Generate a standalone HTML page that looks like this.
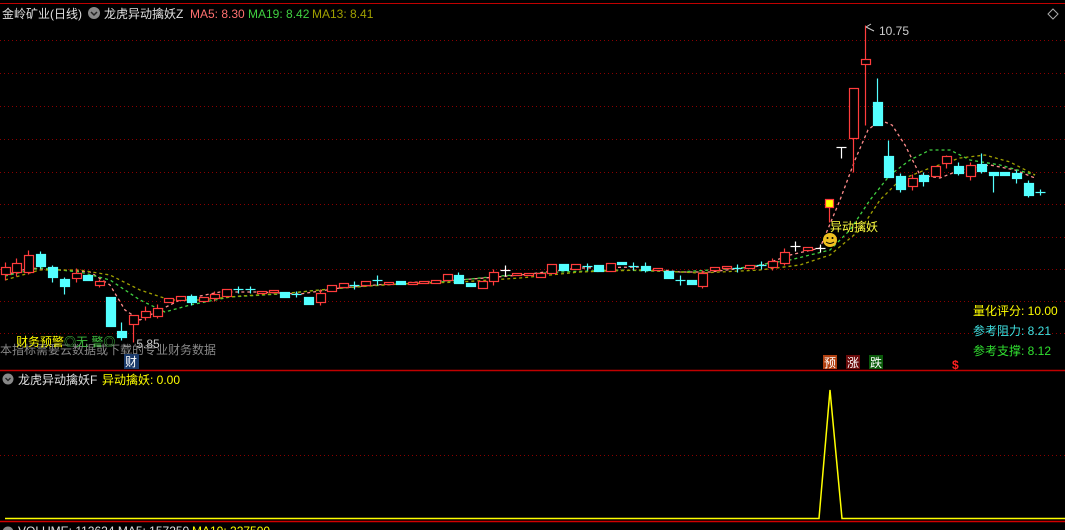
<!DOCTYPE html>
<html><head><meta charset="utf-8">
<style>
html,body{margin:0;padding:0;background:#000;width:1065px;height:530px;overflow:hidden}
svg{display:block}
text{font-family:"Liberation Sans","Noto Sans CJK SC",sans-serif}
</style></head>
<body>
<svg width="1065" height="530" viewBox="0 0 1065 530" xmlns="http://www.w3.org/2000/svg">
<rect width="1065" height="530" fill="#000"/>
<line x1="0" y1="3.5" x2="1065" y2="3.5" stroke="#c00000" stroke-width="1"/>
<g stroke="#8a0000" stroke-width="1" stroke-dasharray="1,3">
<line x1="0" y1="40.5" x2="1065" y2="40.5"/>
<line x1="0" y1="73.5" x2="1065" y2="73.5"/>
<line x1="0" y1="106.5" x2="1065" y2="106.5"/>
<line x1="0" y1="139.5" x2="1065" y2="139.5"/>
<line x1="0" y1="172.5" x2="1065" y2="172.5"/>
<line x1="0" y1="204.5" x2="1065" y2="204.5"/>
<line x1="0" y1="237.5" x2="1065" y2="237.5"/>
<line x1="0" y1="269.5" x2="1065" y2="269.5"/>
<line x1="0" y1="301.5" x2="1065" y2="301.5"/>
<line x1="0" y1="333.5" x2="1065" y2="333.5"/>
<line x1="0" y1="455.5" x2="1065" y2="455.5"/>
</g>
<polyline fill="none" stroke="#ff8c8c" stroke-width="1.3" stroke-dasharray="3,3" points="5,275 30,268 60,270 90,272 110,285 125,310 140,320 160,310 180,300 220,292 260,292 300,294 340,288 400,283 460,280 520,275 580,268 640,267 680,272 710,272 760,266 790,255 820,248 840,200 855,160 868,130 880,120 892,125 905,145 920,175 940,178 960,170 990,165 1015,170 1035,178"/>
<polyline fill="none" stroke="#40d040" stroke-width="1.3" stroke-dasharray="3,3" points="5,276 40,268 80,272 110,280 140,300 165,312 190,305 230,297 280,294 320,290 380,285 440,282 500,276 560,272 620,270 680,272 740,268 790,260 830,250 850,230 870,200 890,175 910,160 930,150 950,150 970,160 1000,165 1035,175"/>
<polyline fill="none" stroke="#a0a000" stroke-width="1.3" stroke-dasharray="3,3" points="5,280 40,270 80,270 110,275 140,290 170,300 200,300 240,296 290,293 340,288 400,284 460,282 520,278 580,272 640,270 700,273 760,270 800,265 830,255 860,230 880,200 900,180 930,168 960,158 985,155 1010,162 1035,175"/>
<g stroke-width="1.2" transform="translate(0.5,0.5)">
<g stroke="#ff3c3c" fill="#000">
<line x1="5" y1="262" x2="5" y2="280"/><rect x="1" y="267" width="9" height="7"/>
<line x1="16" y1="258" x2="16" y2="276"/><rect x="12" y="263" width="9" height="9"/>
<line x1="28" y1="250" x2="28" y2="274"/><rect x="24" y="255" width="9" height="17"/>
<line x1="76" y1="268" x2="76" y2="282"/><rect x="72" y="273" width="9" height="5"/>
<line x1="99" y1="279" x2="99" y2="287"/><rect x="95" y="281" width="9" height="4"/>
<line x1="133" y1="316" x2="133" y2="342"/><rect x="129" y="315" width="9" height="9"/>
<line x1="145" y1="306" x2="145" y2="320"/><rect x="141" y="311" width="9" height="6"/>
<line x1="157" y1="304" x2="157" y2="318"/><rect x="153" y="308" width="9" height="8"/>
<rect x="164" y="298" width="9" height="4"/>
<rect x="176" y="296" width="9" height="4"/>
<rect x="199" y="297" width="9" height="4"/>
<line x1="214" y1="291" x2="214" y2="301"/><rect x="210" y="294" width="9" height="4"/>
<rect x="222" y="289" width="9" height="7"/>
<rect x="257" y="291" width="9" height="2"/>
<rect x="269" y="290" width="9" height="2"/>
<line x1="320" y1="289" x2="320" y2="305"/><rect x="316" y="293" width="9" height="9"/>
<rect x="327" y="285" width="9" height="6"/>
<rect x="339" y="283" width="9" height="4"/>
<rect x="361" y="281" width="9" height="4"/>
<rect x="384" y="282" width="9" height="2"/>
<rect x="408" y="282" width="9" height="2"/>
<rect x="419" y="281" width="9" height="2"/>
<rect x="431" y="280" width="9" height="3"/>
<rect x="443" y="274" width="9" height="6"/>
<rect x="478" y="281" width="9" height="7"/>
<line x1="493" y1="269" x2="493" y2="285"/><rect x="489" y="272" width="9" height="9"/>
<rect x="512" y="273" width="9" height="2"/>
<rect x="524" y="273" width="9" height="2"/>
<rect x="536" y="273" width="9" height="4"/>
<rect x="547" y="264" width="9" height="9"/>
<rect x="571" y="264" width="9" height="5"/>
<rect x="606" y="263" width="9" height="8"/>
<rect x="653" y="268" width="9" height="2"/>
<line x1="702" y1="270" x2="702" y2="288"/><rect x="698" y="273" width="9" height="13"/>
<rect x="710" y="267" width="9" height="3"/>
<rect x="722" y="266" width="9" height="2"/>
<rect x="745" y="265" width="9" height="3"/>
<line x1="772" y1="258" x2="772" y2="270"/><rect x="768" y="261" width="9" height="6"/>
<line x1="784" y1="248" x2="784" y2="265"/><rect x="780" y="252" width="9" height="11"/>
<rect x="803" y="247" width="9" height="3"/>
<line x1="829" y1="207" x2="829" y2="222"/>
<line x1="853" y1="138" x2="853" y2="172"/><rect x="849" y="88" width="9" height="50"/>
<line x1="865" y1="25" x2="865" y2="125"/><rect x="861" y="59" width="9" height="5"/>
<line x1="912" y1="174" x2="912" y2="190"/><rect x="908" y="178" width="9" height="8"/>
<rect x="931" y="166" width="9" height="10"/>
<line x1="946" y1="155" x2="946" y2="168"/><rect x="942" y="156" width="9" height="7"/>
<line x1="970" y1="162" x2="970" y2="180"/><rect x="966" y="165" width="9" height="11"/>
</g>
<rect x="825" y="199" width="8" height="8" fill="#ffff00" stroke="#ff3c3c"/>
<g stroke="#54ffff" fill="#54ffff">
<line x1="40" y1="251" x2="40" y2="268"/><rect x="36" y="254" width="9" height="12"/>
<line x1="52" y1="265" x2="52" y2="282"/><rect x="48" y="267" width="9" height="10"/>
<line x1="64" y1="277" x2="64" y2="294"/><rect x="60" y="279" width="9" height="7"/>
<rect x="83" y="275" width="9" height="5"/>
<rect x="106" y="297" width="9" height="29"/>
<line x1="121" y1="322" x2="121" y2="340"/><rect x="117" y="331" width="9" height="6"/>
<line x1="191" y1="294" x2="191" y2="305"/><rect x="187" y="296" width="9" height="6"/>
<line x1="233" y1="289" x2="243" y2="289"/><line x1="238" y1="286" x2="238" y2="293"/>
<line x1="245" y1="289" x2="255" y2="289"/><line x1="250" y1="286" x2="250" y2="293"/>
<rect x="280" y="292" width="9" height="5"/>
<line x1="291" y1="294" x2="301" y2="294"/><line x1="296" y1="291" x2="296" y2="297"/>
<rect x="304" y="297" width="9" height="7"/>
<line x1="349" y1="285" x2="359" y2="285"/><line x1="354" y1="281" x2="354" y2="289"/>
<line x1="372" y1="280" x2="382" y2="280"/><line x1="377" y1="275" x2="377" y2="285"/>
<rect x="396" y="281" width="9" height="3"/>
<line x1="458" y1="272" x2="458" y2="283"/><rect x="454" y="275" width="9" height="8"/>
<rect x="466" y="283" width="9" height="3"/>
<rect x="559" y="264" width="9" height="6"/>
<line x1="582" y1="266" x2="592" y2="266"/><line x1="587" y1="263" x2="587" y2="270"/>
<rect x="594" y="265" width="9" height="6"/>
<rect x="617" y="262" width="9" height="2"/>
<line x1="628" y1="266" x2="638" y2="266"/><line x1="633" y1="262" x2="633" y2="270"/>
<line x1="645" y1="262" x2="645" y2="272"/><rect x="641" y="266" width="9" height="4"/>
<rect x="664" y="271" width="9" height="7"/>
<line x1="675" y1="280" x2="685" y2="280"/><line x1="680" y1="275" x2="680" y2="285"/>
<rect x="687" y="280" width="9" height="4"/>
<line x1="732" y1="268" x2="742" y2="268"/><line x1="737" y1="264" x2="737" y2="272"/>
<line x1="756" y1="265" x2="766" y2="265"/><line x1="761" y1="261" x2="761" y2="269"/>
<line x1="877" y1="78" x2="877" y2="125"/><rect x="873" y="102" width="9" height="23"/>
<line x1="888" y1="140" x2="888" y2="177"/><rect x="884" y="156" width="9" height="21"/>
<line x1="900" y1="173" x2="900" y2="192"/><rect x="896" y="176" width="9" height="13"/>
<line x1="923" y1="172" x2="923" y2="186"/><rect x="919" y="175" width="9" height="6"/>
<line x1="958" y1="162" x2="958" y2="175"/><rect x="954" y="166" width="9" height="7"/>
<line x1="981" y1="153" x2="981" y2="173"/><rect x="977" y="164" width="9" height="7"/>
<line x1="993" y1="172" x2="993" y2="192"/><rect x="989" y="172" width="9" height="3"/>
<rect x="1000" y="172" width="9" height="3"/>
<line x1="1016" y1="170" x2="1016" y2="183"/><rect x="1012" y="173" width="9" height="5"/>
<line x1="1028" y1="180" x2="1028" y2="197"/><rect x="1024" y="183" width="9" height="12"/>
<line x1="1035" y1="192" x2="1045" y2="192"/><line x1="1040" y1="189" x2="1040" y2="195"/>
</g>
<g stroke="#fff">
<line x1="500" y1="270" x2="510" y2="270"/><line x1="505" y1="265" x2="505" y2="276"/>
<line x1="790" y1="246" x2="800" y2="246"/><line x1="795" y1="241" x2="795" y2="251"/>
<line x1="815" y1="248" x2="825" y2="248"/><line x1="820" y1="244" x2="820" y2="252"/>
<line x1="836" y1="147" x2="846" y2="147"/><line x1="841" y1="147" x2="841" y2="158"/>
</g>
</g>
<text x="2" y="18" font-size="12" fill="#e0e0e0">金岭矿业(日线)</text>
<circle cx="94" cy="13" r="6" fill="#888"/><path d="M91 12l3 3 3-3" stroke="#222" fill="none" stroke-width="1.5"/>
<text x="104" y="18" font-size="12" fill="#e0e0e0">龙虎异动擒妖Z</text>
<text x="190" y="18" font-size="12" fill="#ff7070">MA5: 8.30</text>
<text x="248" y="18" font-size="12" fill="#40d040">MA19: 8.42</text>
<text x="312" y="18" font-size="12" fill="#a0a000">MA13: 8.41</text>
<path d="M1053 9l5 5-5 5-5-5z" fill="none" stroke="#aaa"/>
<path d="M866 27l5-3M866 27l8 4" stroke="#ccc" fill="none"/>
<text x="879" y="35" font-size="12" fill="#ccc">10.75</text>
<text x="121" y="348" font-size="12" fill="#ccc">← 5.85</text>
<circle cx="830" cy="240" r="7" fill="#f0c020"/><circle cx="827.5" cy="238" r="1" fill="#000"/><circle cx="832.5" cy="238" r="1" fill="#000"/><path d="M826 242q4 3 8 0" stroke="#000" fill="none"/>
<text x="830" y="231" font-size="12" fill="#ffff40">异动擒妖</text>
<text x="0" y="354" font-size="12" fill="#888">本指标需要云数据或下载的专业财务数据</text>
<text x="16" y="346" font-size="12" fill="#ffff00">财务预警</text>
<text x="64" y="346" font-size="12" fill="#40c040">◎无 警◎</text>
<rect x="124" y="354" width="15" height="15" fill="#1a3a6a"/>
<text x="125" y="366" font-size="12" fill="#fff">财</text>
<text x="973" y="315" font-size="12" fill="#ffff00">量化评分: 10.00</text>
<text x="973" y="335" font-size="12" fill="#40e0e0">参考阻力: 8.21</text>
<text x="973" y="355" font-size="12" fill="#30e030">参考支撑: 8.12</text>
<rect x="823" y="355" width="14" height="14" fill="#b04010"/><text x="824" y="367" font-size="12" fill="#fff">预</text>
<rect x="846" y="355" width="14" height="14" fill="#6a0a0a"/><text x="847" y="367" font-size="12" fill="#fff">涨</text>
<rect x="869" y="355" width="14" height="14" fill="#0a5a0a"/><text x="870" y="367" font-size="12" fill="#fff">跌</text>
<text x="952" y="369" font-size="12" fill="#ff2020" font-weight="bold">$</text>
<line x1="0" y1="370.5" x2="1065" y2="370.5" stroke="#c00000" stroke-width="1.5"/>
<circle cx="8" cy="379" r="5.5" fill="#888"/><path d="M5.5 378l2.5 2.5 2.5-2.5" stroke="#222" fill="none" stroke-width="1.3"/>
<text x="18" y="384" font-size="12" fill="#e0e0e0">龙虎异动擒妖F</text>
<text x="102" y="384" font-size="12" fill="#ffff00">异动擒妖: 0.00</text>
<polyline fill="none" stroke="#ffff00" stroke-width="1.5" points="5,518.5 819,518.5 830,390 842,518.5 1065,518.5"/>
<line x1="0" y1="521.5" x2="1065" y2="521.5" stroke="#d00000" stroke-width="1.5"/>
<circle cx="8" cy="532" r="5.5" fill="#888"/>
<text x="18" y="535" font-size="12" fill="#e0e0e0">VOLUME: 112624 MA5: 157250</text>
<text x="192" y="535" font-size="12" fill="#ffff00">MA10: 227500</text>
</svg>
</body></html>
